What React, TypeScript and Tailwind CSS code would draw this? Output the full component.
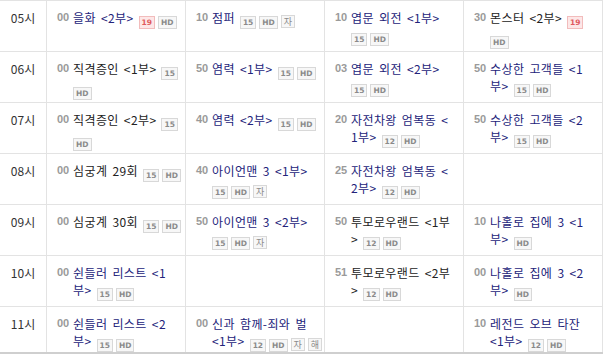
import { Fragment } from "react"

type Show = { m: string; t: string; dark?: boolean; b: string[] } | null

type Row = { hour: string; shows: Show[]; last?: boolean }

// "|" in a title or badge list marks where the line breaks
const rows: Row[] = [
  {
    hour: "05시",
    shows: [
      { m: "00", t: "을화 <2부>", b: ["19", "HD"] },
      { m: "10", t: "점퍼", b: ["15", "HD", "자"] },
      { m: "10", t: "엽문 외전 <1부>", b: ["|", "15", "HD"] },
      { m: "30", t: "몬스터 <2부>", dark: true, b: ["19", "|", "HD"] },
    ],
  },
  {
    hour: "06시",
    shows: [
      { m: "00", t: "직격증인 <1부>", dark: true, b: ["15", "|", "HD"] },
      { m: "50", t: "염력 <1부>", b: ["15", "HD"] },
      { m: "03", t: "엽문 외전 <2부>", b: ["|", "15", "HD"] },
      { m: "50", t: "수상한 고객들 <1|부>", b: ["15", "HD"] },
    ],
  },
  {
    hour: "07시",
    shows: [
      { m: "00", t: "직격증인 <2부>", dark: true, b: ["15", "|", "HD"] },
      { m: "40", t: "염력 <2부>", b: ["15", "HD"] },
      { m: "20", t: "자전차왕 엄복동 <|1부>", b: ["12", "HD"] },
      { m: "50", t: "수상한 고객들 <2|부>", b: ["15", "HD"] },
    ],
  },
  {
    hour: "08시",
    shows: [
      { m: "00", t: "심궁계 29회", dark: true, b: ["15", "HD"] },
      { m: "40", t: "아이언맨 3 <1부>", b: ["|", "15", "HD", "자"] },
      { m: "25", t: "자전차왕 엄복동 <|2부>", b: ["12", "HD"] },
      null,
    ],
  },
  {
    hour: "09시",
    shows: [
      { m: "00", t: "심궁계 30회", dark: true, b: ["15", "HD"] },
      { m: "50", t: "아이언맨 3 <2부>", b: ["|", "15", "HD", "자"] },
      { m: "50", t: "투모로우랜드 <1부|>", dark: true, b: ["12", "HD"] },
      { m: "10", t: "나홀로 집에 3 <1|부>", b: ["HD"] },
    ],
  },
  {
    hour: "10시",
    shows: [
      { m: "00", t: "쉰들러 리스트 <1|부>", b: ["15", "HD"] },
      null,
      { m: "51", t: "투모로우랜드 <2부|>", dark: true, b: ["12", "HD"] },
      { m: "00", t: "나홀로 집에 3 <2|부>", b: ["HD"] },
    ],
  },
  {
    hour: "11시",
    last: true,
    shows: [
      { m: "00", t: "쉰들러 리스트 <2|부>", b: ["15", "HD"] },
      { m: "00", t: "신과 함께-죄와 벌|<1부>", b: ["12", "HD", "자", "해"] },
      null,
      { m: "10", t: "레전드 오브 타잔|<1부>", b: ["12", "HD"] },
    ],
  },
]

function Badge({ label, first, start }: { label: string; first: boolean; start: boolean }) {
  const adult = label === "19"
  const hangul = label === "자" || label === "해"
  return (
    <span
      className={
        "inline-block h-[13px] min-w-[13px] border px-[2px] text-center align-[-2px] leading-[11px] tracking-normal [word-spacing:0] " +
        (hangul ? "text-[9px] " : "text-[7.5px] font-bold ") +
        (start ? "ml-0 " : first ? "ml-[5px] " : "ml-[3px] ") +
        (adult
          ? "border-[#f2bcbc] bg-[#fde7e7] text-[#e05a5e]"
          : "border-[#d8d8d8] bg-[#f7f7f7] text-[#8a8a8a]")
      }
      style={{ fontFamily: hangul ? '"Noto Sans CJK KR", sans-serif' : '"DejaVu Sans", sans-serif' }}
    >
      {label}
    </span>
  )
}

function ShowCell({ show }: { show: Show }) {
  if (!show) return null
  const lines = show.t.split("|")
  let atStart = lines[lines.length - 1] === ""
  let first = true
  return (
    <div className="flex">
      <span
        className="w-[16px] shrink-0 text-[11px] font-bold leading-[17px] text-[#9a9a9a]"
        style={{ fontFamily: '"Liberation Sans", Arial, sans-serif' }}
      >
        {show.m}
      </span>
      <div
        className={
          "whitespace-nowrap text-[12px] leading-[17px] tracking-[0.4px] [word-spacing:2px] " +
          (show.dark ? "text-[#222222]" : "text-[#23237a]")
        }
      >
        {lines.map((l, i) => (
          <Fragment key={i}>
            {i > 0 && <br />}
            {l}
          </Fragment>
        ))}
        {show.b.map((b, i) => {
          if (b === "|") {
            atStart = true
            return <br key={i} />
          }
          const el = <Badge key={i} label={b} first={first} start={atStart} />
          atStart = false
          first = false
          return el
        })}
      </div>
    </div>
  )
}

export default function App() {
  return (
    <div
      className="w-[603px] border-t border-[#e3e3e3] bg-white"
      style={{ fontFamily: '"Noto Sans CJK KR", "Liberation Sans", sans-serif' }}
    >
      {rows.map((row) => (
        <div
          key={row.hour}
          className={
            "flex " +
            (row.last ? "h-[47px] border-b-2 border-[#cfcfcf]" : "h-[51px] border-b border-[#e3e3e3]")
          }
        >
          <div className="w-[47px] shrink-0 border-r border-[#e3e3e3] pt-[8px] text-center text-[12px] leading-[17px] text-[#333333]">
            {row.hour}
          </div>
          {row.shows.map((s, i) => (
            <div
              key={i}
              className="w-[139px] shrink-0 border-r border-[#e3e3e3] pl-[10px] pr-[8px] pt-[8px]"
            >
              <ShowCell show={s} />
            </div>
          ))}
        </div>
      ))}
    </div>
  )
}
